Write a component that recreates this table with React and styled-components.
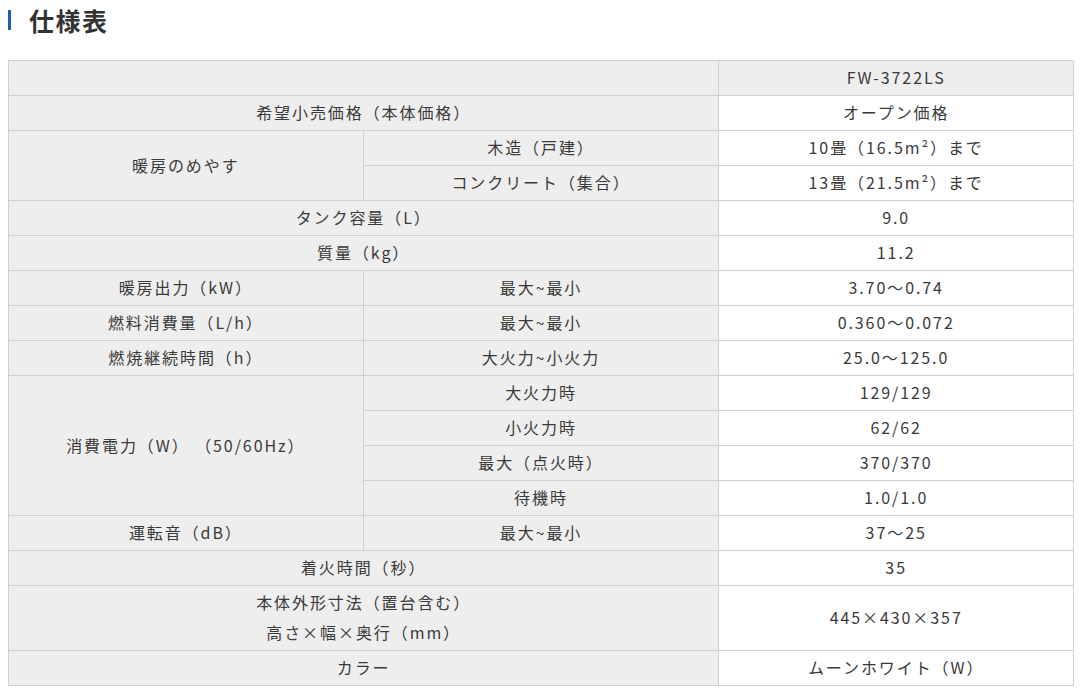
import React from 'react';
import styled, { createGlobalStyle } from 'styled-components';

const GlobalStyle = createGlobalStyle`
  html, body {
    margin: 0;
    padding: 0;
    background: #fff;
  }
  body {
    font-family: "Noto Sans CJK JP", "Noto Sans", sans-serif;
    color: #333;
  }
`;

const Page = styled.div`
  padding: 0 6px 0 8px;
`;

const Heading = styled.h2`
  display: flex;
  align-items: center;
  gap: 18px;
  height: 40px;
  margin: 0 0 20px;
  font-size: 25px;
  font-weight: 700;
  letter-spacing: 1.5px;
  color: #333;

  &::before {
    content: '';
    display: block;
    width: 3px;
    height: 20px;
    background: #1d62a8;
  }
`;

const Table = styled.table`
  width: 1066px;
  border-collapse: collapse;
  table-layout: fixed;
  border: 1px solid #cfcfcf;
  font-size: 16px;
  letter-spacing: 0.12em;
`;

const Cell = styled.td`
  height: 30px;
  padding: 1px 8px 3px;
  line-height: 30px;
  text-align: center;
  vertical-align: middle;
  border: 1px solid #cfcfcf;
  background: ${(p) => (p.$head ? '#eeeeee' : '#ffffff')};
  color: #3a3a3a;
  font-weight: 400;
`;

const rows = [
  { label: '希望小売価格（本体価格）', value: 'オープン価格' },
  {
    label: '暖房のめやす',
    subs: [
      ['木造（戸建）', '10畳（16.5m²）まで'],
      ['コンクリート（集合）', '13畳（21.5m²）まで'],
    ],
  },
  { label: 'タンク容量（L）', value: '9.0' },
  { label: '質量（kg）', value: '11.2' },
  { label: '暖房出力（kW）', subs: [['最大~最小', '3.70～0.74']] },
  { label: '燃料消費量（L/h）', subs: [['最大~最小', '0.360～0.072']] },
  { label: '燃焼継続時間（h）', subs: [['大火力~小火力', '25.0～125.0']] },
  {
    label: '消費電力（W） （50/60Hz）',
    subs: [
      ['大火力時', '129/129'],
      ['小火力時', '62/62'],
      ['最大（点火時）', '370/370'],
      ['待機時', '1.0/1.0'],
    ],
  },
  { label: '運転音（dB）', subs: [['最大~最小', '37～25']] },
  { label: '着火時間（秒）', value: '35' },
  { label: ['本体外形寸法（置台含む）', '高さ×幅×奥行（mm）'], value: '445×430×357' },
  { label: 'カラー', value: 'ムーンホワイト（W）' },
];

const renderLabel = (label) =>
  Array.isArray(label)
    ? label.map((l, i) => (
        <React.Fragment key={i}>
          {i > 0 && <br />}
          {l}
        </React.Fragment>
      ))
    : label;

export default function App() {
  return (
    <Page>
      <GlobalStyle />
      <Heading>仕様表</Heading>
      <Table>
        <colgroup>
          <col style={{ width: '33.3%' }} />
          <col style={{ width: '33.4%' }} />
          <col style={{ width: '33.3%' }} />
        </colgroup>
        <tbody>
          <tr>
            <Cell as="th" $head colSpan={2} />
            <Cell as="th" $head>FW-3722LS</Cell>
          </tr>
          {rows.map((row, i) =>
            row.subs ? (
              row.subs.map(([sub, val], j) => (
                <tr key={`${i}-${j}`}>
                  {j === 0 && (
                    <Cell as="th" $head rowSpan={row.subs.length}>
                      {row.label}
                    </Cell>
                  )}
                  <Cell as="th" $head>{sub}</Cell>
                  <Cell>{val}</Cell>
                </tr>
              ))
            ) : (
              <tr key={i}>
                <Cell as="th" $head colSpan={2}>
                  {renderLabel(row.label)}
                </Cell>
                <Cell>{row.value}</Cell>
              </tr>
            )
          )}
        </tbody>
      </Table>
    </Page>
  );
}
